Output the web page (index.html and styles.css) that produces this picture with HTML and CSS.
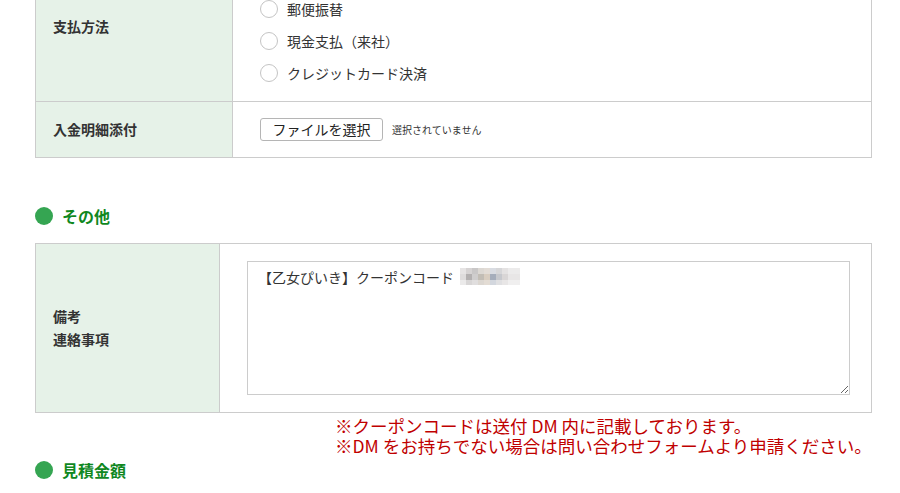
FILE: index.html
```html
<!DOCTYPE html>
<html lang="ja">
<head>
<meta charset="utf-8">
<title>フォーム</title>
<link rel="stylesheet" href="styles.css">
</head>
<body>
<div class="page">
  <div class="form-table">
    <div class="row row-pay">
      <div class="label">支払方法</div>
      <div class="value radios">
        <label class="opt"><input type="radio" name="pay"><span>郵便振替</span></label>
        <label class="opt"><input type="radio" name="pay"><span>現金支払（来社）</span></label>
        <label class="opt"><input type="radio" name="pay"><span>クレジットカード決済</span></label>
      </div>
    </div>
    <div class="row row-file">
      <div class="label">入金明細添付</div>
      <div class="value file">
        <button type="button" class="file-btn">ファイルを選択</button>
        <span class="file-none">選択されていません</span>
      </div>
    </div>
  </div>

  <h2 class="heading heading-other"><span class="dot"></span>その他</h2>

  <div class="form-table narrow">
    <div class="row row-note">
      <div class="label">備考<br>連絡事項</div>
      <div class="value note">
        <div class="textarea-wrap">
          <textarea class="memo">【乙女ぴいき】クーポンコード</textarea>
          <span class="mosaic"></span>
        </div>
      </div>
    </div>
  </div>

  <p class="notice">※クーポンコードは送付 DM 内に記載しております。<br>※DM をお持ちでない場合は問い合わせフォームより申請ください。</p>

  <h2 class="heading heading-est"><span class="dot"></span>見積金額</h2>
</div>
</body>
</html>
```

FILE: styles.css
```css
html, body {
  margin: 0;
  padding: 0;
  background: #fff;
}
body {
  font-family: "Noto Sans CJK JP", "Noto Sans", sans-serif;
  color: #333;
  font-size: 14px;
  overflow: hidden;
}
.page {
  margin-top: -50px;
  padding: 0 28px 0 35px;
}
.form-table {
  border: 1px solid #cccccc;
  border-bottom: none;
}
.row {
  display: grid;
  grid-template-columns: 197px 1fr;
  border-bottom: 1px solid #cccccc;
}
.narrow .row {
  grid-template-columns: 184px 1fr;
}
.label {
  box-sizing: border-box;
  background: #e6f2e8;
  border-right: 1px solid #cccccc;
  display: flex;
  align-items: center;
  padding-left: 17px;
  font-weight: bold;
  font-size: 14px;
  line-height: 23px;
  color: #333;
}
.value {
  padding-left: 27px;
}
.radios {
  padding-top: 42px;
  padding-bottom: 12px;
  display: flex;
  flex-direction: column;
}
.opt {
  display: flex;
  align-items: center;
  height: 32px;
  gap: 9px;
  font-size: 14px;
  color: #333;
}
.opt input {
  appearance: none;
  -webkit-appearance: none;
  margin: 0;
  width: 18px;
  height: 18px;
  border: 1px solid #c4c4c4;
  border-radius: 50%;
  background: #fff;
  box-sizing: border-box;
}
.row-file {
  min-height: 55px;
}
.file {
  display: flex;
  align-items: center;
  gap: 9px;
}
.file-btn {
  font-family: "Noto Sans CJK JP", sans-serif;
  font-size: 14px;
  color: #222;
  height: 23px;
  width: 123px;
  padding: 0;
  border: 1px solid #b5b5b5;
  border-radius: 3px;
  background: #fff;
  line-height: 21px;
}
.file-none {
  font-size: 10px;
  color: #333;
}
.heading {
  display: flex;
  align-items: center;
  gap: 9px;
  margin: 0;
  font-size: 16px;
  line-height: 24px;
  font-weight: bold;
  color: #10881f;
}
.heading-other {
  margin-top: 46px;
  margin-bottom: 15px;
}
.heading-est {
  margin-top: 2px;
}
.dot {
  width: 18px;
  height: 18px;
  border-radius: 50%;
  background: #35a552;
  flex: none;
}
.note {
  padding-top: 17px;
  padding-bottom: 17px;
}
.textarea-wrap {
  position: relative;
  width: 603px;
  height: 134px;
}
.memo {
  display: block;
  box-sizing: border-box;
  width: 603px;
  height: 134px;
  margin: 0;
  border: 1px solid #cccccc;
  padding: 5px 10px;
  font-family: "Noto Sans CJK JP", sans-serif;
  font-size: 14px;
  line-height: 21px;
  color: #333;
  resize: both;
  outline: none;
}
.mosaic {
  position: absolute;
  left: 213px;
  top: 7px;
  width: 60px;
  height: 17px;
  background:
    linear-gradient(90deg, #e6e4e4 0 6px, #d6d3d3 6px 12px, #c9c7c7 12px 18px, #dcd8d3 18px 24px, #e2dcd6 24px 30px, #d9dce2 30px 36px, #d6d6d8 36px 42px, #e4e2e2 42px 48px, #ecebeb 48px 60px) 0 0 / 100% 6px no-repeat,
    linear-gradient(90deg, #dedcdc 0 6px, #b3b0b0 6px 12px, #cfcdcd 12px 18px, #c2bdb5 18px 24px, #d8cdc0 24px 30px, #a5adbb 30px 36px, #c6c8cd 36px 42px, #d9d6d6 42px 48px, #e8e6e6 48px 60px) 0 6px / 100% 6px no-repeat,
    linear-gradient(90deg, #ebeaea 0 6px, #d8d6d6 6px 12px, #e0dede 12px 18px, #dcd7d1 18px 24px, #e3dcd4 24px 30px, #d3d7de 30px 36px, #e0e0e2 36px 42px, #e8e6e6 42px 48px, #f0efef 48px 60px) 0 12px / 100% 5px no-repeat;
}
.notice {
  margin: 3px 0 0 0;
  padding-left: 300px;
  font-size: 17.5px;
  line-height: 20px;
  color: #c00000;
}
```
